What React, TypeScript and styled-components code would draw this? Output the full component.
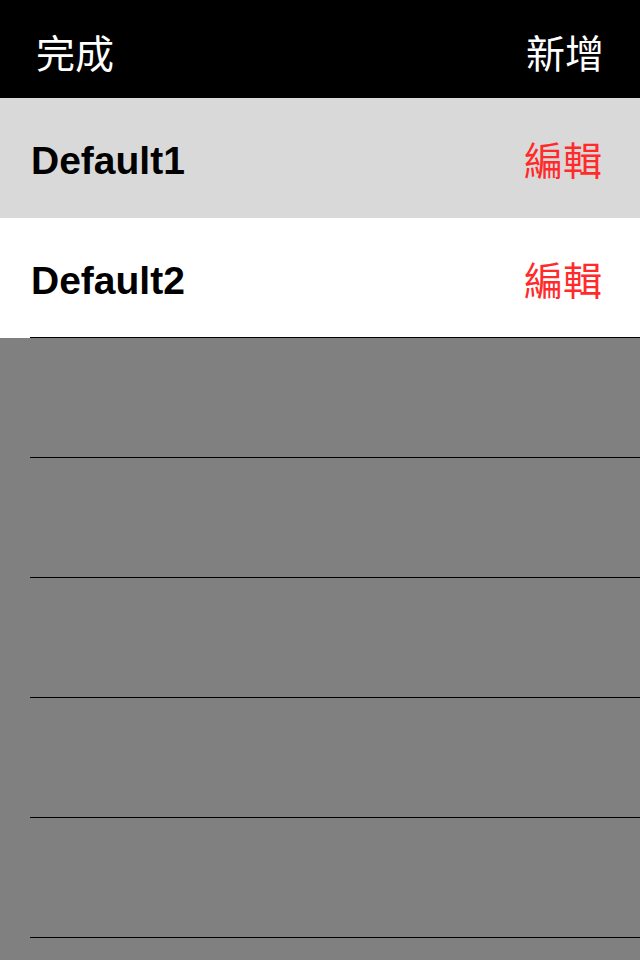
import React from "react";
import styled, { createGlobalStyle } from "styled-components";

const Global = createGlobalStyle`
  html, body { margin: 0; padding: 0; background: #808080; }
  body { font-family: "Liberation Sans", "Noto Sans CJK TC", sans-serif; }
`;

const Page = styled.div`
  width: 640px;
  min-height: 960px;
  background: #808080;
  display: flex;
  flex-direction: column;
  overflow: hidden;
`;

const Header = styled.header`
  height: 98px;
  background: #000;
  display: flex;
  align-items: center;
  justify-content: space-between;
  padding: 0 36px 0 36px;
  box-sizing: border-box;
`;

const HeaderButton = styled.span`
  color: #fff;
  font-family: "Noto Sans CJK TC", "Noto Sans CJK SC", sans-serif;
  font-weight: 400;
  font-size: 39px;
  line-height: 1;
  margin-top: 4px;
`;

const Row = styled.div<{ $bg: string; $line?: boolean }>`
  height: 120px;
  flex: none;
  background: ${(p) => p.$bg};
  display: flex;
  align-items: center;
  justify-content: space-between;
  padding: 0 38px 0 31px;
  box-sizing: border-box;
  position: relative;
  &::after {
    content: "";
    display: ${(p) => (p.$line ? "block" : "none")};
    position: absolute;
    left: 30px;
    right: 0;
    bottom: 0;
    height: 1px;
    background: #000;
  }
`;

const Name = styled.span`
  font-family: "Liberation Sans", Arial, sans-serif;
  font-weight: bold;
  font-size: 39px;
  color: #000;
  margin-top: 5px;
`;

const Edit = styled.span`
  font-family: "Noto Sans CJK TC", "Noto Sans CJK SC", sans-serif;
  font-size: 39px;
  line-height: 1;
  color: #ff2b2b;
`;

export default function App() {
  return (
    <Page>
      <Global />
      <Header>
        <HeaderButton>完成</HeaderButton>
        <HeaderButton>新增</HeaderButton>
      </Header>
      <Row $bg="#d9d9d9">
        <Name>Default1</Name>
        <Edit>編輯</Edit>
      </Row>
      <Row $bg="#ffffff" $line>
        <Name>Default2</Name>
        <Edit>編輯</Edit>
      </Row>
      {[0, 1, 2, 3, 4].map((i) => (
        <Row key={i} $bg="#808080" $line />
      ))}
    </Page>
  );
}
